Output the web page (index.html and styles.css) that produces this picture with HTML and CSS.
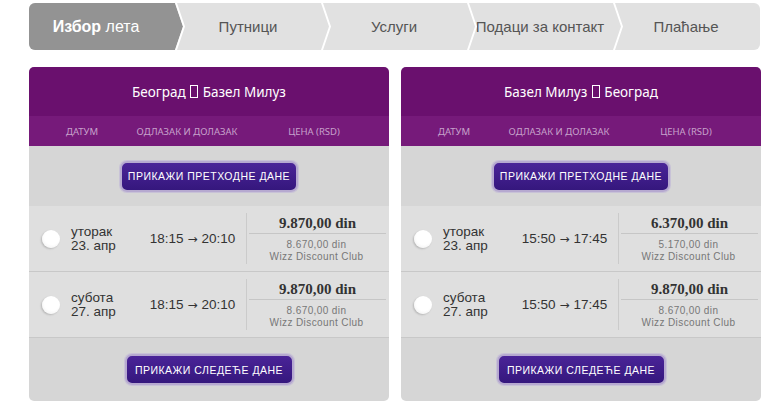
FILE: index.html
```html
<!DOCTYPE html>
<html lang="sr">
<head>
<meta charset="utf-8">
<title>Избор лета</title>
<link rel="stylesheet" href="styles.css">
</head>
<body>
<div class="page">
  <nav class="steps">
    <div class="step active"><b>Избор</b>&nbsp;лета</div>
    <div class="step">Путници</div>
    <div class="step">Услуги</div>
    <div class="step">Подаци за контакт</div>
    <div class="step">Плаћање</div>
  </nav>
  <div class="panels">
    <section class="panel">
      <header class="panel-title">Београд <span class="tofu"></span> Базел Милуз</header>
      <div class="cols"><span>ДАТУМ</span><span>ОДЛАЗАК И ДОЛАЗАК</span><span>ЦЕНА (RSD)</span></div>
      <div class="more"><button class="btn">ПРИКАЖИ ПРЕТХОДНЕ ДАНЕ</button></div>
      <div class="row">
        <div class="date"><span class="radio"></span><span>уторак<br>23. апр</span></div>
        <div class="time">18:15 <span class="arr">→</span> 20:10</div>
        <div class="price"><div class="main">9.870,00 din</div><div class="sub">8.670,00 din<br>Wizz Discount Club</div></div>
      </div>
      <div class="row">
        <div class="date"><span class="radio"></span><span>субота<br>27. апр</span></div>
        <div class="time">18:15 <span class="arr">→</span> 20:10</div>
        <div class="price"><div class="main">9.870,00 din</div><div class="sub">8.670,00 din<br>Wizz Discount Club</div></div>
      </div>
      <div class="more bottom"><button class="btn btn-next">ПРИКАЖИ СЛЕДЕЋЕ ДАНЕ</button></div>
    </section>
    <section class="panel">
      <header class="panel-title">Базел Милуз <span class="tofu"></span> Београд</header>
      <div class="cols"><span>ДАТУМ</span><span>ОДЛАЗАК И ДОЛАЗАК</span><span>ЦЕНА (RSD)</span></div>
      <div class="more"><button class="btn">ПРИКАЖИ ПРЕТХОДНЕ ДАНЕ</button></div>
      <div class="row">
        <div class="date"><span class="radio"></span><span>уторак<br>23. апр</span></div>
        <div class="time">15:50 <span class="arr">→</span> 17:45</div>
        <div class="price"><div class="main">6.370,00 din</div><div class="sub">5.170,00 din<br>Wizz Discount Club</div></div>
      </div>
      <div class="row">
        <div class="date"><span class="radio"></span><span>субота<br>27. апр</span></div>
        <div class="time">15:50 <span class="arr">→</span> 17:45</div>
        <div class="price"><div class="main">9.870,00 din</div><div class="sub">8.670,00 din<br>Wizz Discount Club</div></div>
      </div>
      <div class="more bottom"><button class="btn btn-next">ПРИКАЖИ СЛЕДЕЋЕ ДАНЕ</button></div>
    </section>
  </div>
</div>
</body>
</html>
```
FILE: styles.css
```css
* { box-sizing: border-box; }
body {
  margin: 0;
  background: #fff;
  font-family: "Liberation Sans", Arial, sans-serif;
}
.page {
  padding: 3px 0 0 29px;
}
.steps {
  display: flex;
  width: 731px;
  height: 47px;
  background: #e1e1e1;
  border-radius: 6px;
  overflow: hidden;
}
.step {
  position: relative;
  flex: 0 0 146px;
  display: flex;
  align-items: center;
  justify-content: center;
  font-size: 15px;
  color: #555;
  white-space: nowrap;
}
.step b { font-weight: bold; }
.step + .step::before {
  content: "";
  position: absolute;
  left: 0;
  top: 0;
  width: 10px;
  height: 100%;
  background: #fff;
  clip-path: polygon(0 0, 2px 0, 10px 50%, 2px 100%, 0 100%, 8px 50%);
  z-index: 2;
}
.step.active {
  background: #939393;
  color: #fff;
  font-size: 16px;
  padding-right: 12px;
  z-index: 1;
}
.step.active::after {
  content: "";
  position: absolute;
  left: 100%;
  top: 0;
  width: 8px;
  height: 100%;
  background: #939393;
  clip-path: polygon(0 0, 100% 50%, 0 100%);
}
.panels {
  display: flex;
  gap: 12px;
  margin-top: 17px;
}
.panel {
  width: 360px;
  border-radius: 5px;
  overflow: hidden;
  background: #d6d6d6;
}
.panel-title {
  height: 49px;
  display: flex;
  align-items: center;
  justify-content: center;
  background: #6a106e;
  color: #fff;
  font-family: "Noto Sans", "Open Sans", sans-serif;
  font-size: 13.5px;
  white-space: pre;
}
.tofu {
  display: inline-block;
  width: 8px;
  height: 13px;
  border: 1px solid #fff;
  margin: 0 1px;
  vertical-align: -2px;
}
.cols {
  height: 30px;
  display: grid;
  grid-template-columns: 106px 104px 1fr;
  align-items: center;
  background: #761a7a;
  color: #c7a2cb;
  font-family: "Noto Sans", "Open Sans", sans-serif;
  font-size: 9.5px;
  text-align: center;
  white-space: nowrap;
}
.more {
  height: 60px;
  display: flex;
  align-items: center;
  justify-content: center;
}
.more.bottom { height: 63px; }
.btn {
  width: 178px;
  height: 31px;
  border: 2px solid #b6a9d0;
  border-radius: 7px;
  background: linear-gradient(#4a2498, #35177d);
  box-shadow: 0 0 0 1px rgba(190, 180, 215, 0.6);
  color: #fff;
  font-family: "Liberation Sans", Arial, sans-serif;
  font-size: 10.5px;
  letter-spacing: 0.5px;
  padding: 0;
}
.btn-next { width: 169px; }
.row {
  height: 66px;
  display: grid;
  grid-template-columns: 110px 107px 1fr;
  background: #dfdfdf;
  border-bottom: 1px solid #c8c8c8;
  color: #333;
}
.date {
  display: flex;
  align-items: center;
  gap: 11px;
  padding-left: 13px;
  font-size: 13.5px;
  line-height: 14px;
}
.radio {
  width: 18px;
  height: 18px;
  border-radius: 50%;
  background: radial-gradient(circle at 55% 40%, #fff 50%, #ececec 100%);
  box-shadow: -1px 1px 2px rgba(0, 0, 0, 0.18);
  flex: none;
}
.time {
  display: flex;
  align-items: center;
  justify-content: center;
  gap: 4px;
  font-size: 13.5px;
  white-space: nowrap;
}
.arr {
  font-family: "DejaVu Sans", sans-serif;
  font-size: 12px;
}
.price {
  margin: 7px 3px 7px 0;
  border-left: 1px solid #cbcbcb;
  display: flex;
  flex-direction: column;
}
.main {
  height: 21px;
  margin-left: 2px;
  border-bottom: 1px solid #c6c6c6;
  display: flex;
  align-items: center;
  justify-content: center;
  font-family: "Liberation Serif", "Times New Roman", serif;
  font-weight: bold;
  font-size: 15px;
  color: #333;
}
.sub {
  padding-top: 5px;
  text-align: center;
  font-size: 10px;
  line-height: 12px;
  letter-spacing: 0.4px;
  color: #777;
}
```
